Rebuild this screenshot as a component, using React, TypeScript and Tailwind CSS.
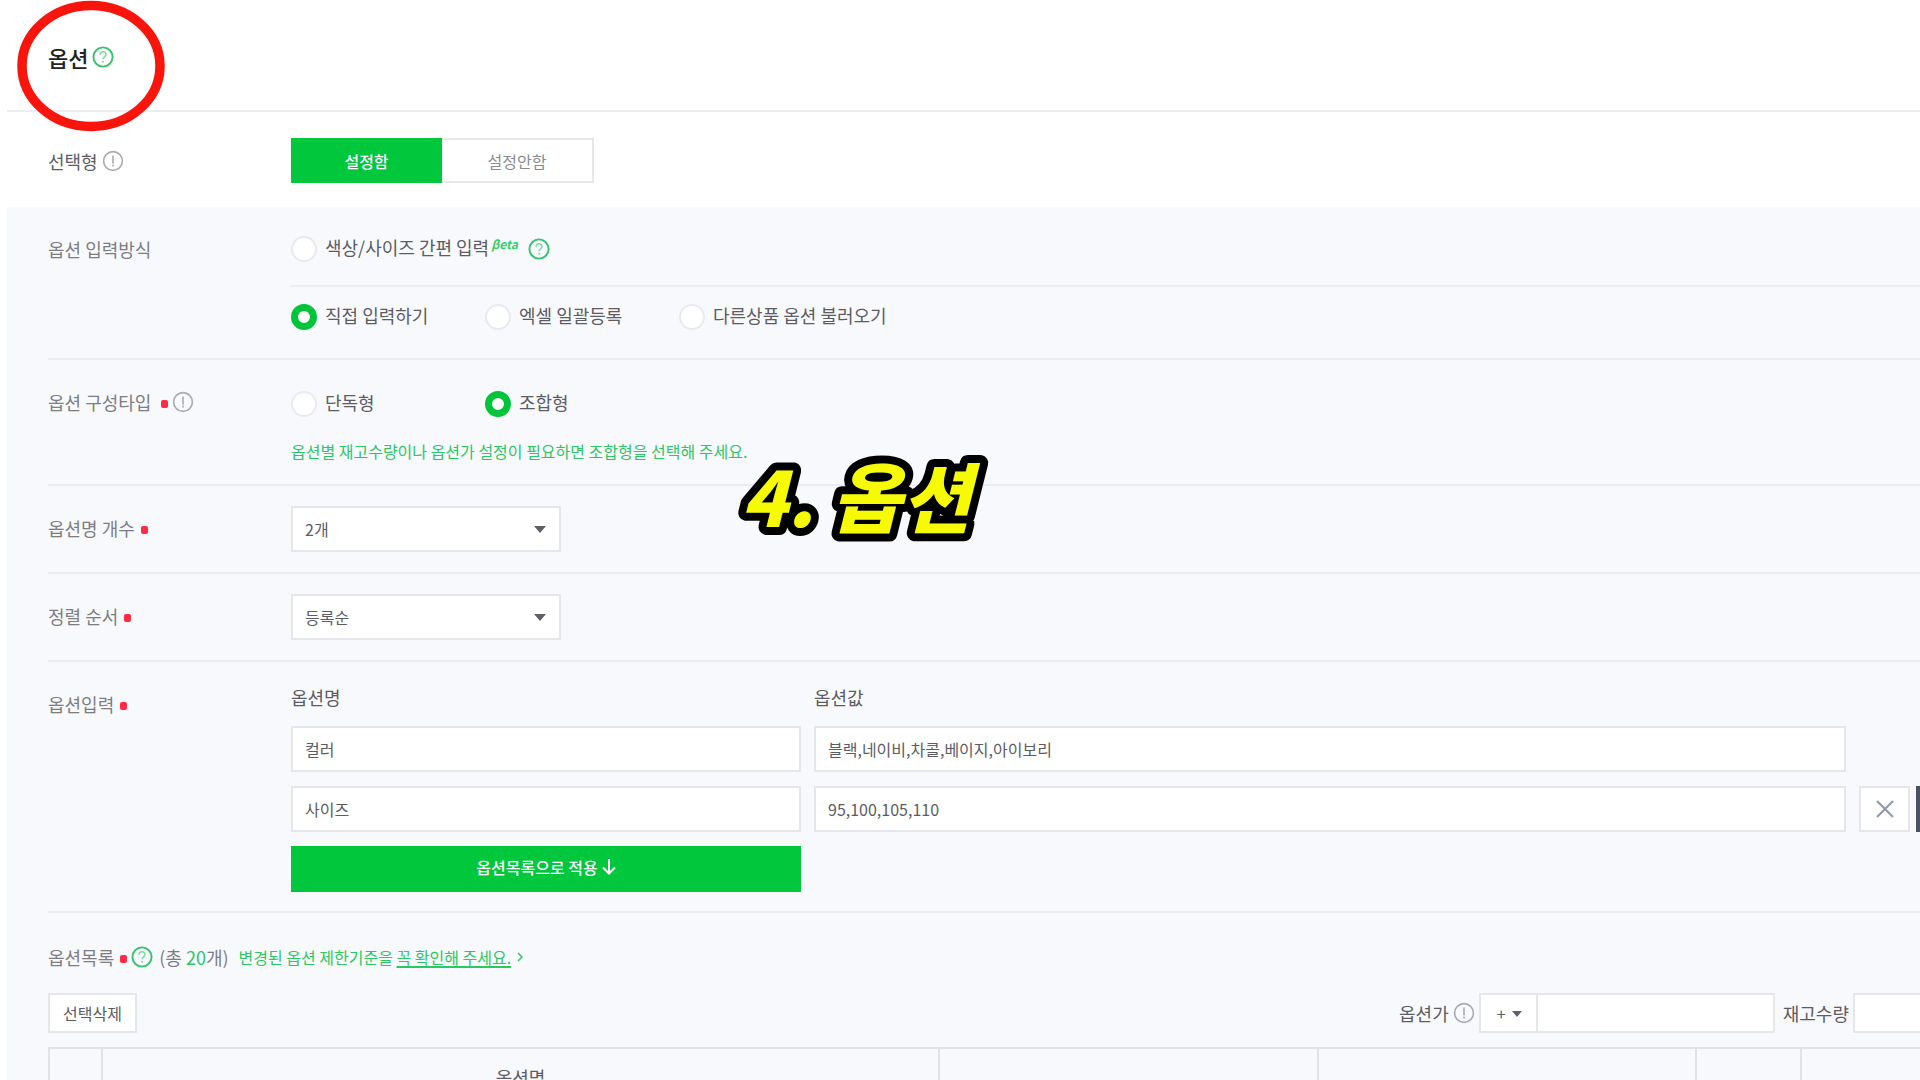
import type { ReactNode } from "react";
import { clsx } from "clsx";

const fieldClass =
  "h-[46px] rounded-none border-2 border-[#e5e7eb] bg-white px-3 text-base text-[#5c5c64] outline-none";

function HelpIcon() {
  return (
    <svg viewBox="0 0 22 22" className="size-[22px] shrink-0" fill="none" aria-hidden="true">
      <circle cx="11" cy="11" r="9.6" stroke="#35c46c" strokeWidth="1.9" />
      <path
        d="M8 8.8c0-1.8 1.3-3 3-3s3 1.2 3 2.8c0 2.2-3 2.3-3 4.6"
        stroke="#7fd8a0"
        strokeWidth="1.5"
      />
      <circle cx="11" cy="15.8" r="1" fill="#7fd8a0" />
    </svg>
  );
}

function InfoIcon() {
  return (
    <svg viewBox="0 0 22 22" className="size-[22px] shrink-0" fill="none" aria-hidden="true">
      <circle cx="11" cy="11" r="9.4" stroke="#a9abb0" strokeWidth="1.6" />
      <path d="M11 5.5v8M11 14.6v1.8" stroke="#a9abb0" strokeWidth="1.6" />
    </svg>
  );
}

function Required() {
  return <span className="mt-1 h-2 w-[7px] shrink-0 rounded-xs bg-[#ff2b45]" />;
}

function Caret({ className }: { className?: string }) {
  return (
    <svg viewBox="0 0 12 7" className={clsx("pointer-events-none absolute", className)} aria-hidden="true">
      <path d="M0 0h12L6 7z" fill="#5f6168" />
    </svg>
  );
}

interface RowProps {
  label: ReactNode;
  className?: string;
  children: ReactNode;
}

function Row({ label, className, children }: RowProps) {
  return (
    <div className="flex border-b-2 border-[#ebedf1]">
      <div className="flex w-[243px] shrink-0 pt-[30px]">
        <div className="flex h-6 items-center text-[#7d7d84]">{label}</div>
      </div>
      <div className={clsx("min-w-0 flex-1", className)}>{children}</div>
    </div>
  );
}

interface RadioProps {
  name: string;
  label: string;
  checked?: boolean;
}

function Radio({ name, label, checked }: RadioProps) {
  return (
    <label className="flex h-[26px] items-center gap-2 whitespace-nowrap text-[#5c5c64]">
      <input
        type="radio"
        name={name}
        defaultChecked={checked}
        className="size-[26px] shrink-0 appearance-none rounded-full border-2 border-[#e8eaee] bg-white checked:border-[7px] checked:border-[#00c43a]"
      />
      <span className="pb-1 leading-[22px]">{label}</span>
    </label>
  );
}

function SelectBox({ id, value }: { id: string; value: string }) {
  return (
    <div className="relative w-[270px]">
      <select id={id} className={clsx(fieldClass, "block w-full appearance-none")}>
        <option>{value}</option>
      </select>
      <Caret className="top-5 right-[15px] h-[7px] w-3" />
    </div>
  );
}

function Caption() {
  return (
    <svg
      viewBox="0 0 300 140"
      className="pointer-events-none absolute top-[428px] left-[720px] h-[140px] w-[300px]"
    >
      <text
        x="21"
        y="99"
        className="font-['Noto_Sans_CJK_KR',sans-serif] text-[76px] font-black italic"
        fill="#f6fa05"
        stroke="#000"
        strokeWidth="16"
        strokeLinejoin="round"
        paintOrder="stroke"
      >
        4. 옵션
      </text>
    </svg>
  );
}

export default function App() {
  return (
    <div className="relative h-screen overflow-hidden bg-white pl-[7px] font-['Noto_Sans_CJK_KR',sans-serif] text-lg leading-6">
      <header className="flex h-[112px] items-center gap-1 border-b-2 border-[#ebedf1] pt-1 pl-[41px]">
        <h1 className="text-[22px] font-medium text-[#222]">옵션</h1>
        <HelpIcon />
      </header>

      <div className="flex items-center pt-[26px] pb-6 pl-[41px]">
        <div className="flex w-[243px] items-center gap-1 text-[#5c5c64]">
          선택형
          <InfoIcon />
        </div>
        <div className="flex text-base">
          <button type="button" className="h-[45px] w-[151px] bg-[#00c73c] font-medium text-white">
            설정함
          </button>
          <button
            type="button"
            className="h-[45px] w-[152px] border-2 border-l-0 border-[#e5e7eb] bg-white text-[#8a8a90]"
          >
            설정안함
          </button>
        </div>
      </div>

      <main className="bg-[#f8f9fd] pl-[41px]">
        <Row label="옵션 입력방식">
          <div className="flex h-20 items-center border-b-2 border-[#ebedf1] pt-1.5">
            <Radio name="input-type" label="색상/사이즈 간편 입력" />
            <em className="mb-2.5 ml-0.5 text-xs leading-4 font-bold text-[#35d069]">βeta</em>
            <span className="ml-2.5">
              <HelpIcon />
            </span>
          </div>
          <div className="grid grid-cols-[194px_194px_1fr] pt-[17px] pb-7">
            <Radio name="input-type" label="직접 입력하기" checked />
            <Radio name="input-type" label="엑셀 일괄등록" />
            <Radio name="input-type" label="다른상품 옵션 불러오기" />
          </div>
        </Row>

        <Row
          className="pt-[31px] pb-[19px]"
          label={
            <>
              옵션 구성타입
              <span className="mr-1 ml-2.5 flex">
                <Required />
              </span>
              <InfoIcon />
            </>
          }
        >
          <div className="grid grid-cols-[194px_1fr]">
            <Radio name="option-type" label="단독형" />
            <Radio name="option-type" label="조합형" checked />
          </div>
          <p className="mt-[22px] pb-0.5 text-base leading-6 text-[#2cc763]">
            옵션별 재고수량이나 옵션가 설정이 필요하면 조합형을 선택해 주세요.
          </p>
        </Row>

        <Row
          className="py-5"
          label={
            <label htmlFor="name-count" className="flex items-center gap-1.5">
              옵션명 개수
              <Required />
            </label>
          }
        >
          <SelectBox id="name-count" value="2개" />
        </Row>

        <Row
          className="py-5"
          label={
            <label htmlFor="sort-order" className="flex items-center gap-1.5">
              정렬 순서
              <Required />
            </label>
          }
        >
          <SelectBox id="sort-order" value="등록순" />
        </Row>

        <Row
          className="pt-[23px] pb-[19px]"
          label={
            <span className="flex items-center gap-1.5">
              옵션입력
              <Required />
            </span>
          }
        >
          {/* the trailing add button runs past the right edge */}
          <div className="grid w-[calc(100%+47px)] grid-cols-[510px_1fr_51px_51px] gap-y-3.5 text-[#5c5c64]">
            <span id="col-name" className="mb-[3px]">
              옵션명
            </span>
            <span id="col-value" className="col-span-3 ml-[13px]">
              옵션값
            </span>
            <input aria-labelledby="col-name" defaultValue="컬러" className={fieldClass} />
            <input
              aria-labelledby="col-value"
              defaultValue="블랙,네이비,차콜,베이지,아이보리"
              className={clsx(fieldClass, "mr-[19px] ml-[13px]")}
            />
            <span className="col-span-2" />
            <input aria-labelledby="col-name" defaultValue="사이즈" className={fieldClass} />
            <input
              aria-labelledby="col-value"
              defaultValue="95,100,105,110"
              className={clsx(fieldClass, "mr-[19px] ml-[13px]")}
            />
            <button
              type="button"
              aria-label="삭제"
              className="mr-1.5 -ml-1.5 flex items-center justify-center border-2 border-[#e5e7eb] bg-white"
            >
              <svg viewBox="0 0 18 18" className="size-[18px]" fill="none" stroke="#929bab" strokeWidth="2.2">
                <path d="M1 1l16 16M17 1L1 17" />
              </svg>
            </button>
            <button type="button" aria-label="추가" className="bg-[#4a5164]" />
            <button
              type="button"
              className="flex h-[46px] items-center justify-center gap-1 bg-[#00c73c] pb-1 text-base font-medium text-white"
            >
              옵션목록으로 적용
              <svg viewBox="0 0 14 16" className="h-4 w-3.5" fill="none" stroke="#fff" strokeWidth="2">
                <path d="M7 0v14M1 8.5l6 6 6-6" />
              </svg>
            </button>
          </div>
        </Row>

        <div className="flex h-[57px] items-center pt-[31px] text-[#7d7d84]">
          옵션목록
          <span className="mr-1 ml-1.5 flex">
            <Required />
          </span>
          <HelpIcon />
          <span className="ml-1.5">
            (총 <span className="text-[#2cc763]">20</span>개)
          </span>
          <a href="#limits" className="ml-2.5 flex items-center gap-1.5 text-base text-[#2cc763]">
            <span>
              변경된 옵션 제한기준을 <span className="underline decoration-2 underline-offset-2">꼭 확인해 주세요.</span>
            </span>
            <svg viewBox="0 0 6 10" className="h-2.5 w-1.5" fill="none" stroke="#2cc763" strokeWidth="1.5">
              <path d="M1 1l4 4-4 4" />
            </svg>
          </a>
        </div>

        <div className="mt-[23px] flex h-10 w-[calc(100%+120px)] items-center text-[#5c5c64]">
          <button type="button" className="h-10 w-[89px] border-2 border-[#e5e7eb] bg-white text-base">
            선택삭제
          </button>
          <label htmlFor="price" className="ml-auto">
            옵션가
          </label>
          <span className="mx-1">
            <InfoIcon />
          </span>
          <div className="relative">
            <select
              aria-label="부호"
              className="block h-10 w-[59px] appearance-none rounded-none border-2 border-[#e5e7eb] bg-white pl-4 text-base"
            >
              <option>+</option>
            </select>
            <Caret className="top-[18px] right-4 h-1.5 w-2.5" />
          </div>
          <input id="price" className="h-10 w-[237px] border-2 border-l-0 border-[#e5e7eb] bg-white px-3 text-base" />
          <label htmlFor="stock" className="mr-1 ml-2">
            재고수량
          </label>
          <input id="stock" className="h-10 w-[187px] border-2 border-[#e5e7eb] bg-white px-3 text-base" />
        </div>

        <table className="mt-3.5 w-full table-fixed border-collapse text-[#5c5c64]">
          <thead>
            <tr className="h-14 border-t-2 border-[#e0e2e7]">
              <th className="w-[53px] border-x-2 border-[#e0e2e7]" />
              <th className="w-[837px] border-r-2 border-[#e0e2e7] font-normal">옵션명</th>
              <th className="w-[379px] border-r-2 border-[#e0e2e7]" />
              <th className="w-[378px] border-r-2 border-[#e0e2e7]" />
              <th className="w-[105px] border-r-2 border-[#e0e2e7]" />
              <th />
            </tr>
          </thead>
        </table>
      </main>

      <svg
        viewBox="0 0 148 132"
        className="pointer-events-none absolute top-0 left-[17px] h-[132px] w-[148px]"
        aria-hidden="true"
      >
        <ellipse cx="74" cy="66" rx="69" ry="60.5" fill="none" stroke="#fa150c" strokeWidth="9.5" />
      </svg>
      <Caption />
    </div>
  );
}
